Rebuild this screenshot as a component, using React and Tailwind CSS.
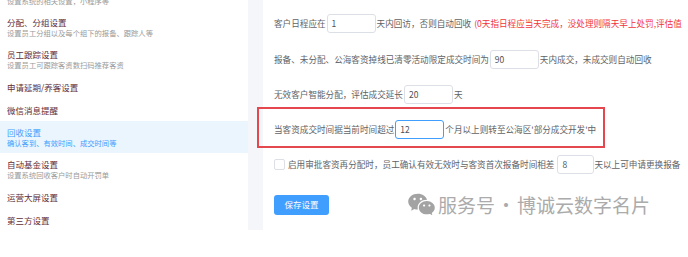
import React from "react";
import { RiWechatFill } from "react-icons/ri";

const font = { fontFamily: '"Noto Sans CJK SC", "Noto Sans", sans-serif' };

function SideItem({ title, sub, active }) {
  if (!sub) {
    return (
      <div className="h-[23px] flex items-center pl-[7px]">
        <span className="text-[8.5px] leading-[12px] text-[#5e2d37]">{title}</span>
      </div>
    );
  }
  return (
    <div className={`h-[32px] pl-[7px] pt-[5px] ${active ? "bg-[#ebf5fe]" : ""}`}>
      <div className={`text-[8.5px] leading-[12px] ${active ? "text-[#409eff]" : "text-[#5e2d37]"}`}>{title}</div>
      <div className={`text-[7.3px] leading-[10px] ${active ? "text-[#409eff]" : "text-[#9a9a9a]"}`}>{sub}</div>
    </div>
  );
}

function Input({ value, w = "w-[49px]", focus }) {
  return (
    <div
      className={`${w} h-[19px] shrink-0 rounded-[3px] bg-white border ${focus ? "border-[#409eff]" : "border-[#dcdfe6]"} flex items-center pl-[4px] text-[8.5px] text-[#505050]`}
    >
      {value}
    </div>
  );
}

export default function App() {
  return (
    <div className="relative w-[688px] h-[257px] bg-white overflow-hidden whitespace-nowrap" style={font}>
      <div className="flex h-[230px]">
        <div className="w-[248px] shrink-0 bg-white">
          <div className="-mt-[21px]">
            <SideItem title="小程序设置" sub="设置系统的相关设置，小程序等" />
            <SideItem title="分配、分组设置" sub="设置员工分组以及每个组下的报备、跟踪人等" />
            <SideItem title="员工跟踪设置" sub="设置员工可跟踪客资数扫码推荐客资" />
            <SideItem title="申请延期/养客设置" />
            <SideItem title="微信消息提醒" />
            <SideItem title="回收设置" sub="确认客到、有效时间、成交时间等" active />
            <SideItem title="自动基金设置" sub="设置系统回收客户时自动开罚单" />
            <SideItem title="运营大屏设置" />
            <SideItem title="第三方设置" />
          </div>
        </div>
        <div className="w-[15px] shrink-0 bg-[#f4f6f9]" />
        <div className="flex-1 min-w-0 overflow-hidden bg-white pl-[11px] pt-[14px] text-[8.6px] text-[#606266]">
          <div className="flex items-center h-[19px]">
            <span className="pr-[1px]">客户日程应在</span>
            <Input value="1" />
            <span className="pl-[1px]">天内回访，否则自动回收</span>
            <span className="pl-[3px] text-[#f0353c]">(0天指日程应当天完成，没处理则隔天早上处罚,评估值</span>
          </div>
          <div className="flex items-center h-[19px] mt-[17px]">
            <span className="pr-[1px]">报备、未分配、公海客资掉线已清零活动限定成交时间为</span>
            <Input value="90" />
            <span className="pl-[1px]">天内成交，未成交则自动回收</span>
          </div>
          <div className="flex items-center h-[19px] mt-[16px]">
            <span className="pr-[1px]">无效客户智能分配，评估成交延长</span>
            <Input value="20" />
            <span className="pl-[1px]">天</span>
          </div>
          <div className="flex items-center h-[19px] mt-[16px]">
            <span className="pr-[1px]">当客资成交时间据当前时间超过</span>
            <Input value="12" focus />
            <span className="pl-[1px]">个月以上则转至公海区'部分成交开发'中</span>
          </div>
          <div className="flex items-center h-[19px] mt-[16px]">
            <div className="w-[11px] h-[11px] rounded-[2px] border border-[#dcdfe6] bg-white mr-[3px] shrink-0" />
            <span className="pr-[3px]">启用审批客资再分配时，员工确认有效无效时与客资首次报备时间相差</span>
            <Input value="8" w="w-[37px]" />
            <span>天以上可申请更换报备</span>
          </div>
          <div className="flex items-center mt-[16px]">
            <button className="w-[55px] h-[20px] rounded-[3px] bg-[#409eff] text-white text-[8.5px] flex items-center justify-center">
              保存设置
            </button>
            <div className="ml-[78px] flex items-center text-[#ababab]">
              <RiWechatFill className="w-[29px] h-[29px] text-[#a3a3a3]" />
              <span className="ml-[2px] text-[19px] leading-[24px]">服务号</span>
              <span className="w-[22px] text-center text-[19px] leading-[24px]">·</span>
              <span className="text-[19px] leading-[24px]">博诚云数字名片</span>
            </div>
          </div>
        </div>
      </div>
      <div className="absolute left-[257px] top-[107px] w-[348px] h-[41px] border-2 border-[#e4474d] pointer-events-none" />
    </div>
  );
}
